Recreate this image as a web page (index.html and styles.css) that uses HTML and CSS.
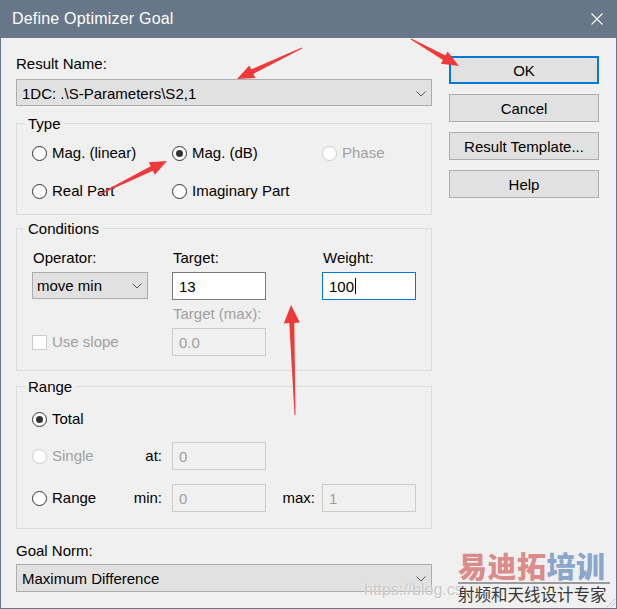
FILE: index.html
```html
<!DOCTYPE html>
<html lang="en">

<head>
    <meta charset="UTF-8">
    <title>Define Optimizer Goal</title>
    <link rel="stylesheet" href="styles.css">
</head>

<body>
    <div class="window">
        <div class="titlebar">
            <span class="title">Define Optimizer Goal</span>
            <svg class="close" width="12" height="12" viewBox="0 0 12 12">
                <path d="M0.5 0.5 L11.5 11.5 M11.5 0.5 L0.5 11.5" stroke="#fff" stroke-width="1.1" fill="none" />
            </svg>
        </div>

        <div class="content">
            <div class="main">
                <div class="label">Result Name:</div>
                <div class="select">
                    <span>1DC: .\S-Parameters\S2,1</span>
                    <svg class="chevron" width="10" height="6" viewBox="0 0 10 6"><path d="M0.5 0.5 L5 5 L9.5 0.5" /></svg>
                </div>

                <!-- Type -->
                <div class="group type-group">
                    <div class="legend">Type</div>
                    <div class="type-grid">
                        <div class="opt"><span class="radio"></span>Mag. (linear)</div>
                        <div class="opt"><span class="radio on"></span>Mag. (dB)</div>
                        <div class="opt off"><span class="radio"></span>Phase</div>
                        <div class="opt"><span class="radio"></span>Real Part</div>
                        <div class="opt"><span class="radio"></span>Imaginary Part</div>
                    </div>
                </div>

                <!-- Conditions -->
                <div class="group cond-group">
                    <div class="legend">Conditions</div>
                    <div class="cond-grid">
                        <div class="label">Operator:</div>
                        <div class="label">Target:</div>
                        <div class="label">Weight:</div>
                        <div class="select small">
                            <span>move min</span>
                            <svg class="chevron" width="10" height="6" viewBox="0 0 10 6"><path d="M0.5 0.5 L5 5 L9.5 0.5" /></svg>
                        </div>
                        <div class="field">13</div>
                        <div class="field focus">100<span class="caret"></span></div>
                        <div class="label off max-label">Target (max):</div>
                        <div class="opt off slope"><span class="check"></span>Use slope</div>
                        <div class="field off max-field">0.0</div>
                    </div>
                </div>

                <!-- Range -->
                <div class="group range-group">
                    <div class="legend">Range</div>
                    <div class="range-grid">
                        <div class="opt total"><span class="radio on"></span>Total</div>
                        <div class="opt off"><span class="radio"></span>Single</div>
                        <div class="side">at:</div>
                        <div class="field off">0</div>
                        <div></div>
                        <div></div>
                        <div class="opt"><span class="radio"></span>Range</div>
                        <div class="side">min:</div>
                        <div class="field off">0</div>
                        <div class="side max">max:</div>
                        <div class="field off">1</div>
                    </div>
                </div>

                <div class="label goal-label">Goal Norm:</div>
                <div class="select goal">
                    <span>Maximum Difference</span>
                    <svg class="chevron" width="10" height="6" viewBox="0 0 10 6"><path d="M0.5 0.5 L5 5 L9.5 0.5" /></svg>
                </div>
            </div>

            <div class="buttons">
                <div class="btn default">OK</div>
                <div class="btn">Cancel</div>
                <div class="btn">Result Template...</div>
                <div class="btn">Help</div>
            </div>
        </div>

        <div class="url">https://blog.cs</div>
        <div class="watermark">
            <div class="wm-big"><span class="wm-red">易迪拓</span><span class="wm-blue">培训</span></div>
            <div class="wm-rule"></div>
            <div class="wm-small">射频和天线设计专家</div>
        </div>

        <svg class="grip" width="12" height="12" viewBox="0 0 12 12">
            <path d="M11 3 L3 11 M11 7 L7 11" stroke="#9a9a9a" stroke-width="1" stroke-dasharray="1 1" fill="none" />
        </svg>

        <!-- red annotation arrows -->
        <svg class="arrows" width="617" height="609" viewBox="0 0 617 609">
            <polygon points="302.2,48.5 253.4,73.9 255.4,78 237,79 249.3,65.4 251.3,69.4 301.8,47.6" />
            <polygon points="411.3,38.6 445.4,55.5 447.6,51.6 459,66 440.8,63.8 443,59.9 410.8,39.4" />
            <polygon points="99.8,193.6 150.7,166.3 148.7,162.2 167,161 154.8,174.8 152.9,170.8 100.2,194.5" />
            <polygon points="294.5,415 289.3,323.1 283.8,323.4 291,305 299.8,322.6 294.3,322.9 295.5,415" />
        </svg>
    </div>
</body>

</html>
```

FILE: styles.css
```css
/* base */
* {
    margin: 0;
    padding: 0;
    box-sizing: border-box;
}

body {
    background-color: #f0f0f0;
    font-family: "Liberation Sans", Arial, sans-serif;
    font-size: 15px;
    color: #000;
}

.window {
    position: relative;
    width: 617px;
    height: 609px;
    border: 1px solid #677789;
    border-top: none;
    background-color: #f0f0f0;
    overflow: hidden;
}

/* title bar */
.titlebar {
    height: 38px;
    background-color: #677789;
    color: #fff;
    display: flex;
    align-items: center;
    justify-content: space-between;
    padding: 0 13px 0 11px;
}

.title {
    font-size: 16px;
    line-height: 38px;
    letter-spacing: 0.2px;
}

/* layout */
.content {
    display: flex;
    gap: 17px;
    padding-left: 15px;
}

.main {
    width: 416px;
    padding-top: 17px;
}

.label {
    line-height: 18px;
    height: 18px;
    white-space: nowrap;
}

.label.off {
    color: #a0a0a0;
}

/* dropdowns */
.select {
    display: flex;
    align-items: center;
    justify-content: space-between;
    height: 27px;
    margin-top: 6px;
    padding: 2px 5px 0 5px;
    border: 1px solid #adadad;
    background-color: #e1e1e1;
    line-height: 18px;
}

.chevron path {
    fill: none;
    stroke: #555;
    stroke-width: 1;
}

.select.small {
    width: 116px;
    margin-top: 0;
    padding: 0 5px 0 4px;
}

.select.goal {
    height: 28px;
    margin-top: 4px;
}

/* group boxes */
.group {
    border: 1px solid #dcdcdc;
}

.legend {
    width: fit-content;
    margin: -9px 0 0 8px;
    padding: 0 3px;
    background-color: #f0f0f0;
    line-height: 18px;
}

.type-group {
    margin-top: 17px;
}

.type-grid {
    display: grid;
    grid-template-columns: 140px 150px 1fr;
    row-gap: 20px;
    padding: 11px 0 14px 15px;
}

.opt {
    display: flex;
    align-items: center;
    gap: 5px;
    height: 18px;
    line-height: 18px;
    white-space: nowrap;
}

.opt.off {
    color: #a0a0a0;
}

.radio {
    flex: none;
    width: 15px;
    height: 15px;
    border: 1px solid #333;
    border-radius: 50%;
    background-color: #fff;
    display: flex;
    align-items: center;
    justify-content: center;
}

.radio.on::after {
    content: "";
    width: 7px;
    height: 7px;
    border-radius: 50%;
    background-color: #333;
}

.opt.off .radio {
    border-color: #cccccc;
}

.check {
    flex: none;
    width: 15px;
    height: 15px;
    border: 1px solid #cccccc;
    background-color: #fff;
}

/* conditions */
.cond-group {
    margin-top: 13px;
}

.cond-grid {
    display: grid;
    grid-template-columns: 140px 150px 94px;
    grid-template-rows: 18px 28px 18px 28px;
    row-gap: 5px;
    align-items: center;
    padding: 11px 0 14px 15px;
}

.cond-grid .label {
    padding-left: 1px;
}

.cond-grid .select.small {
    height: 27px;
    align-self: start;
}

.max-label {
    grid-column: 2;
    grid-row: 3;
}

.slope {
    grid-column: 1;
    grid-row: 4;
}

.max-field {
    grid-column: 2;
    grid-row: 4;
}

.field {
    display: flex;
    align-items: center;
    width: 94px;
    height: 28px;
    padding: 0 6px;
    border: 1px solid #7a7a7a;
    background-color: #fff;
}

.field.focus {
    border-color: #0078d7;
}

.field.off {
    border-color: #cccccc;
    background-color: #f0f0f0;
    color: #a0a0a0;
}

.caret {
    width: 1px;
    height: 16px;
    margin-left: 1px;
    background-color: #000;
}

/* range */
.range-group {
    margin-top: 15px;
}

.range-grid {
    display: grid;
    grid-template-columns: 100px 40px 94px 56px 94px;
    grid-template-rows: 18px 28px 28px;
    row-gap: 14px;
    align-items: center;
    padding: 14px 0 16px 15px;
}

.total {
    grid-column: 1 / -1;
}

.side {
    text-align: right;
    padding-right: 10px;
    line-height: 18px;
}

.side.max {
    padding-right: 7px;
}

.goal-label {
    margin-top: 13px;
}

/* buttons */
.buttons {
    width: 150px;
    padding-top: 18px;
    display: flex;
    flex-direction: column;
    gap: 10px;
}

.btn {
    height: 28px;
    display: flex;
    align-items: center;
    justify-content: center;
    border: 1px solid #adadad;
    background-color: #e1e1e1;
}

.btn.default {
    border-color: #0078d7;
    box-shadow: inset 0 0 0 1px #0078d7;
}

/* watermark overlay */
.url {
    position: absolute;
    left: 363px;
    top: 581px;
    font-size: 16px;
    line-height: 18px;
    color: #c8c8c8;
    text-shadow: 0 0 2px #fff;
    white-space: nowrap;
}

.watermark {
    position: absolute;
    left: 457px;
    top: 548px;
    width: 152px;
    font-family: "Noto Sans CJK SC", sans-serif;
}

.wm-big {
    font-size: 29px;
    font-weight: 900;
    line-height: 34px;
    letter-spacing: 0.5px;
    white-space: nowrap;
}

.wm-red {
    color: #da8c8a;
}

.wm-blue {
    color: #8aa6cb;
}

.wm-rule {
    height: 2px;
    background-color: #9a9a9a;
}

.wm-small {
    font-size: 16.5px;
    line-height: 20px;
    color: #383838;
    white-space: nowrap;
}

.grip {
    position: absolute;
    right: 0;
    bottom: 0;
}

.arrows {
    position: absolute;
    left: -1px;
    top: 0;
    pointer-events: none;
}

.arrows polygon {
    fill: #f03a3a;
}
```
